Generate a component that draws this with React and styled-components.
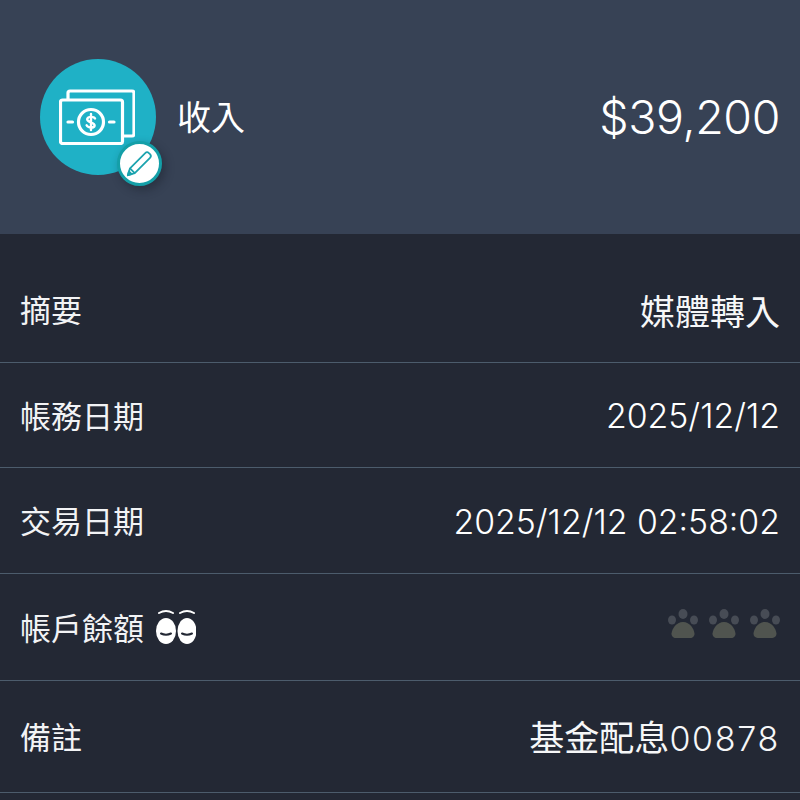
import React from "react";
import styled, { createGlobalStyle } from "styled-components";

const Global = createGlobalStyle`
  html, body { margin: 0; padding: 0; background: #232834; }
  body { font-family: "Inter", "Noto Sans CJK TC", sans-serif; }
`;
const Page = styled.div`
  width: 800px; height: 800px; overflow: hidden; background: #232834; color: #fff;
`;
const Header = styled.header`
  height: 234px; box-sizing: border-box; background: #374255;
  display: flex; align-items: center; justify-content: space-between;
  padding: 0 20px 0 40px;
`;
const Left = styled.div`display: flex; align-items: center; gap: 21px;`;
const IconWrap = styled.div`position: relative; width: 116px; height: 116px;`;
const Circle = styled.div`
  width: 116px; height: 116px; border-radius: 50%; background: #1fb1c6;
  display: flex; align-items: center; justify-content: center;
  padding-right: 2px; box-sizing: border-box;
`;
const Badge = styled.div`
  position: absolute; left: 77px; top: 82px; width: 45px; height: 45px; box-sizing: border-box;
  border-radius: 50%; background: #fff; border: 3px solid #149fa8;
  box-shadow: 3px 4px 10px rgba(20, 25, 35, .4);
  display: flex; align-items: center; justify-content: center;
`;
const Title = styled.div`
  font: 400 34px/1 "Noto Sans CJK TC", sans-serif; padding-bottom: 3px;
`;
const Amount = styled.div`
  font: 300 46.500px/1 "Inter", sans-serif; letter-spacing: -.4px; color: #fff;
`;
const List = styled.div`padding-top: 23px;`;
const Row = styled.div`
  height: ${p => p.$h}px; box-sizing: border-box;
  border-bottom: 1px solid #4c5c6c;
  display: flex; align-items: center; justify-content: space-between;
  padding: 0 20px;
`;
const Label = styled.div`
  display: flex; align-items: center; gap: 12px; padding-bottom: 2px;
  font: 400 31px/1 "Noto Sans CJK TC", sans-serif; color: #f2f3f5;
`;
const Value = styled.div`
  font: 400 35px/1 "Noto Sans CJK TC", sans-serif; color: #f6f7f8;
`;
const DateValue = styled.div`
  font: 300 33.800px/1 "Inter", sans-serif; color: #fff; padding-top: 2px;
`;
const Digits = styled.span`
  font: 300 34px/1 "Inter", sans-serif; letter-spacing: 1.700px;
`;
const Paws = styled.div`display: flex; gap: 11px; margin-top: -6px;`;

const Bill = () => (
  <svg width="76" height="56" viewBox="0 0 76 56" fill="none" stroke="#fff" strokeWidth="3.200" strokeLinejoin="round" strokeLinecap="round">
    <path d="M9 10V4a2 2 0 0 1 2-2h62a2 2 0 0 1 2 2v41a2 2 0 0 1-2 2h-8" />
    <rect x="1.500" y="11" width="62" height="43.500" rx="2" />
    <circle cx="32" cy="33" r="12.500" />
    <path d="M9 33h4.500M50.500 33h4.500" />
    <path d="M36 29.500c-1-2-7-2.500-7.800.5-.8 3.500 7.800 3 7.400 6.500-.4 3-6.500 2.600-8-.2M32 25v16" strokeWidth="2.400" />
  </svg>
);
const Pencil = () => (
  <svg width="28" height="27" viewBox="0 0 32 31" fill="none" stroke="#1ba3ae" strokeWidth="2" strokeLinejoin="round">
    <path d="M2 29l2.500-8L22 3.500a3 3 0 0 1 4.200 0l1.300 1.300a3 3 0 0 1 0 4.200L10 26.500z" />
    <path d="M4.500 21l5.500 5.500" />
    <path d="M2 29l1.300-4.500 3.200 3.200z" fill="#1ba3ae" />
  </svg>
);
const Eyes = () => (
  <svg width="40" height="40" viewBox="0 0 40 40">
    <ellipse cx="10" cy="25" rx="10" ry="13" fill="#fff" />
    <ellipse cx="31" cy="25" rx="9.500" ry="13" fill="#fff" />
    <path d="M5 27.500q5 2.500 10 0M26 27.500q5 2.500 10 0" stroke="#232834" strokeWidth="2" fill="none" strokeLinecap="round" />
    <path d="M3 7q7-4 14 0M24 7q7-4 14 0" stroke="#fff" strokeWidth="2" fill="none" strokeLinecap="round" />
  </svg>
);
const Paw = () => (
  <svg width="30" height="30" viewBox="0 0 30 30">
    <g fill="#474c55">
      <ellipse cx="4" cy="11" rx="4" ry="4.500" />
      <ellipse cx="15" cy="5" rx="4.500" ry="5" />
      <ellipse cx="26" cy="11" rx="4" ry="4.500" />
    </g>
    <path fill="#50544f" d="M15 13c7 0 11 7 11.500 11.500.2 2.500-2 4.500-4 4.500H7.500c-2 0-4.200-2-4-4.500C4 20 8 13 15 13z" />
  </svg>
);

export default function App() {
  return (
    <Page>
      <Global />
      <Header>
        <Left>
          <IconWrap>
            <Circle><Bill /></Circle>
            <Badge><Pencil /></Badge>
          </IconWrap>
          <Title>收入</Title>
        </Left>
        <Amount>$39,200</Amount>
      </Header>
      <List>
        <Row $h={106}><Label>摘要</Label><Value>媒體轉入</Value></Row>
        <Row $h={105}><Label>帳務日期</Label><DateValue>2025/12/12</DateValue></Row>
        <Row $h={106}><Label>交易日期</Label><DateValue>2025/12/12 02:58:02</DateValue></Row>
        <Row $h={107}><Label>帳戶餘額<Eyes /></Label><Paws><Paw /><Paw /><Paw /></Paws></Row>
        <Row $h={112}><Label>備註</Label><Value>基金配息<Digits>00878</Digits></Value></Row>
      </List>
    </Page>
  );
}
